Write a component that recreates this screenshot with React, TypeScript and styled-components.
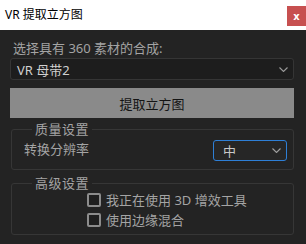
import React from "react";
import styled, { createGlobalStyle } from "styled-components";

const Global = createGlobalStyle`
  html, body { margin: 0; padding: 0; background: #232323; }
  body { font-family: "Noto Sans", "Noto Sans CJK SC", sans-serif; }
`;

const Window = styled.div`
  width: 306px;
  height: 244px;
  background: #232323;
  display: flex;
  flex-direction: column;
  overflow: hidden;
`;

const TitleBar = styled.div`
  height: 30px;
  background: #ffffff;
  display: flex;
  align-items: flex-start;
  justify-content: space-between;
  flex-shrink: 0;
`;

const Title = styled.div`
  font-size: 12px;
  line-height: 17px;
  color: #000;
  padding: 6px 0 0 5px;
`;

const CloseBtn = styled.div`
  margin-top: 6px;
  width: 19px;
  height: 20px;
  background: #c75050;
  color: #fff;
  font-family: "DejaVu Sans", sans-serif;
  font-weight: bold;
  font-size: 10px;
  display: flex;
  align-items: center;
  justify-content: center;
`;

const Body = styled.div`
  padding: 10px 12px 0 10px;
  display: flex;
  flex-direction: column;
`;

const Label = styled.div`
  font-size: 13px;
  line-height: 17px;
  color: #a4a4a4;
  padding-left: 3px;
`;

const Dropdown = styled.div`
  margin-top: 1px;
  height: 20px;
  border: 1px solid #353535;
  border-radius: 3px;
  background: #1d1d1d;
  display: flex;
  align-items: center;
  justify-content: space-between;
  padding: 0 5px 0 6px;
  font-size: 13px;
  color: #d0d0d0;
`;

const Chevron = ({ color = "#9a9a9a" }: { color?: string }) => (
  <svg width="9" height="5" viewBox="0 0 9 5">
    <path d="M0.5 0.5 L4.5 4.5 L8.5 0.5" fill="none" stroke={color} strokeWidth="1.1" />
  </svg>
);

const ActionButton = styled.div`
  margin-top: 8px;
  height: 30px;
  background: #8a8a8a;
  color: #141414;
  font-size: 13px;
  display: flex;
  align-items: center;
  justify-content: center;
`;

const Group = styled.fieldset<{ $top: number; $pb: number }>`
  margin: ${(p) => p.$top}px 0 0 1px;
  padding: 0 6px ${(p) => p.$pb}px 12px;
  border: 1px solid #363636;
  border-radius: 3px;
  min-width: 0;
`;

const Legend = styled.legend`
  font-size: 13px;
  line-height: 17px;
  color: #a4a4a4;
  padding: 0 3px;
  margin-left: 8px;
  letter-spacing: 0.5px;
`;

const Row = styled.div`
  display: flex;
  align-items: center;
  justify-content: space-between;
  margin-top: 2px;
`;

const RowLabel = styled.div`
  font-size: 13px;
  color: #a4a4a4;
  margin-top: -4px;
`;

const Select = styled.div`
  height: 19px;
  width: 58px;
  border: 1px solid #2e7fd6;
  border-radius: 3px;
  background: #262626;
  display: flex;
  align-items: center;
  justify-content: space-between;
  padding: 0 5px 0 9px;
  font-size: 13px;
  color: #c8c8c8;
  box-sizing: content-box;
`;

const CheckList = styled.div`
  display: flex;
  flex-direction: column;
  gap: 6px;
  padding-left: 63px;
  margin-top: 1px;
`;

const CheckRow = styled.label`
  display: flex;
  align-items: center;
  gap: 5px;
  font-size: 13px;
  line-height: 14px;
  color: #a4a4a4;
`;

const Box = styled.span`
  width: 10px;
  height: 10px;
  border: 2px solid #8c8c8c;
  border-radius: 2px;
  background: #1f1f1f;
  flex-shrink: 0;
`;

export default function App() {
  return (
    <>
      <Global />
      <Window>
        <TitleBar>
          <Title>VR 提取立方图</Title>
          <CloseBtn>x</CloseBtn>
        </TitleBar>
        <Body>
          <Label>选择具有 360 素材的合成:</Label>
          <Dropdown>
            <span>VR 母带2</span>
            <Chevron />
          </Dropdown>
          <ActionButton>提取立方图</ActionButton>
          <Group $top={3} $pb={8}>
            <Legend>质量设置</Legend>
            <Row>
              <RowLabel>转换分辨率</RowLabel>
              <Select>
                <span>中</span>
                <Chevron color="#a0a0a0" />
              </Select>
            </Row>
          </Group>
          <Group $top={5} $pb={7}>
            <Legend>高级设置</Legend>
            <CheckList>
              <CheckRow>
                <Box />
                我正在使用 3D 增效工具
              </CheckRow>
              <CheckRow>
                <Box />
                使用边缘混合
              </CheckRow>
            </CheckList>
          </Group>
        </Body>
      </Window>
    </>
  );
}
